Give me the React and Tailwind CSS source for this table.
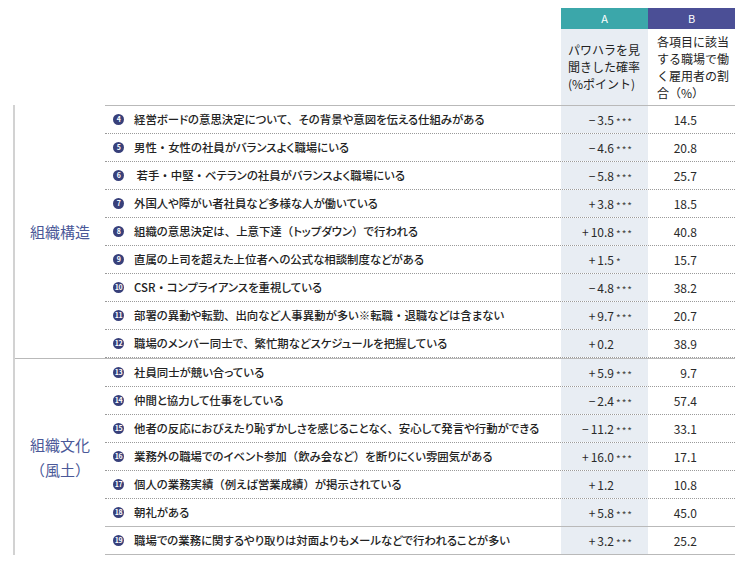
const groups = [
  {
    label: ["組織構造"],
    rows: [
      { no: 4, text: "経営ボードの意思決定について、その背景や意図を伝える仕組みがある", sign: "−", a: "3.5", star: "***", b: "14.5" },
      { no: 5, text: "男性・女性の社員がバランスよく職場にいる", sign: "−", a: "4.6", star: "***", b: "20.8" },
      { no: 6, text: " 若手・中堅・ベテランの社員がバランスよく職場にいる", sign: "−", a: "5.8", star: "***", b: "25.7" },
      { no: 7, text: "外国人や障がい者社員など多様な人が働いている", sign: "+", a: "3.8", star: "***", b: "18.5" },
      { no: 8, text: "組織の意思決定は、上意下達（トップダウン）で行われる", sign: "+", a: "10.8", star: "***", b: "40.8" },
      { no: 9, text: "直属の上司を超えた上位者への公式な相談制度などがある", sign: "+", a: "1.5", star: "*", b: "15.7" },
      { no: 10, text: "CSR・コンプライアンスを重視している", sign: "−", a: "4.8", star: "***", b: "38.2" },
      { no: 11, text: "部署の異動や転勤、出向など人事異動が多い※転職・退職などは含まない", sign: "+", a: "9.7", star: "***", b: "20.7" },
      { no: 12, text: "職場のメンバー同士で、繁忙期などスケジュールを把握している", sign: "+", a: "0.2", star: "", b: "38.9" },
    ],
  },
  {
    label: ["組織文化", "（風土）"],
    rows: [
      { no: 13, text: "社員同士が競い合っている", sign: "+", a: "5.9", star: "***", b: "9.7" },
      { no: 14, text: "仲間と協力して仕事をしている", sign: "−", a: "2.4", star: "***", b: "57.4" },
      { no: 15, text: "他者の反応におびえたり恥ずかしさを感じることなく、安心して発言や行動ができる", sign: "−", a: "11.2", star: "***", b: "33.1" },
      { no: 16, text: "業務外の職場でのイベント参加（飲み会など）を断りにくい雰囲気がある", sign: "+", a: "16.0", star: "***", b: "17.1" },
      { no: 17, text: "個人の業務実績（例えば営業成績）が掲示されている", sign: "+", a: "1.2", star: "", b: "10.8" },
      { no: 18, text: "朝礼がある", sign: "+", a: "5.8", star: "***", b: "45.0", solid: true },
      { no: 19, text: "職場での業務に関するやり取りは対面よりもメールなどで行われることが多い", sign: "+", a: "3.2", star: "***", b: "25.2", solid: true },
    ],
  },
];

// punctuation stays full width while the kana are set proportionally
function RowText({ text }) {
  const parts = text.split(/([・、（）])/);
  return parts.map((p, i) =>
    /^[・、（）]$/.test(p) ? (
      <span key={i} className="[font-feature-settings:normal]">
        {p}
      </span>
    ) : (
      <span key={i}>{p}</span>
    )
  );
}

function Row({ row }) {
  const border = row.solid
    ? "border-b border-solid border-[#b9b9b9]"
    : "border-b border-dotted border-[#9a9a9a]";
  return (
    <div className={`flex h-[28px] items-stretch ${border}`}>
      <div className="flex w-[456px] items-center pl-[8px]">
        <span className="flex h-[11px] w-[11px] shrink-0 items-center justify-center rounded-full bg-[#38407a] text-[7px] font-bold leading-none tracking-[-0.5px] text-white">
          {row.no}
        </span>
        <span className="ml-[10px] whitespace-pre text-[11.4px] font-medium text-[#222] [font-feature-settings:'palt']">
          <RowText text={row.text} />
        </span>
      </div>
      <div className="flex w-[87px] items-center bg-[#e8edf3] text-[12px] text-[#2a2a2a]">
        <span className="w-[53px] text-right">
          <span className="pr-[2px]">{row.sign}</span>
          {row.a}
        </span>
        <span className="relative top-[2px] ml-[2px] text-[10px] leading-none tracking-[1px] text-[#444]">
          {row.star}
        </span>
      </div>
      <div className="flex w-[87px] items-center justify-end pr-[38px] text-[12px] text-[#2a2a2a]">
        {row.b}
      </div>
    </div>
  );
}

function Group({ group, first }) {
  return (
    <div className={`flex ${first ? "" : "border-t border-[#b9b9b9]"}`}>
      <div className="flex w-[90px] flex-col items-center justify-center gap-[4px] text-[15px] leading-[21px] text-[#4a5898]">
        {group.label.map((l) => (
          <span key={l}>{l}</span>
        ))}
      </div>
      <div className={`w-[630px] ${first ? "border-t border-[#b9b9b9]" : ""}`}>
        {group.rows.map((row) => (
          <Row key={row.no} row={row} />
        ))}
      </div>
    </div>
  );
}

export default function App() {
  return (
    <div
      className="h-[563px] w-[750px] overflow-hidden bg-white"
      style={{ fontFamily: '"Noto Sans CJK JP", "Noto Sans", sans-serif' }}
    >
      <div className="flex h-[105px] pt-[8px]">
        <div className="w-[561px]" />
        <div className="flex w-[87px] flex-col">
          <div className="flex h-[21px] items-center justify-center bg-[#3ba7aa] text-[11px] text-white">A</div>
          <div className="flex flex-1 items-center bg-[#e8edf3] pb-[2px] pl-[7px] text-[12px] leading-[17px] text-[#222]">
            <p>
              パワハラを見
              <br />
              聞きした確率
              <br />
              (%ポイント)
            </p>
          </div>
        </div>
        <div className="flex w-[87px] flex-col">
          <div className="flex h-[21px] items-center justify-center bg-[#4b4f96] text-[11px] text-white">B</div>
          <div className="flex flex-1 items-center pl-[9px] text-[12px] leading-[17px] text-[#222]">
            <p>
              各項目に該当
              <br />
              する職場で働
              <br />
              く雇用者の割
              <br />
              合（%）
            </p>
          </div>
        </div>
      </div>
      <div className="ml-[13px] w-[722px] border-l-2 border-[#d2d2d2]">
        {groups.map((g, i) => (
          <Group key={i} group={g} first={i === 0} />
        ))}
      </div>
    </div>
  );
}
